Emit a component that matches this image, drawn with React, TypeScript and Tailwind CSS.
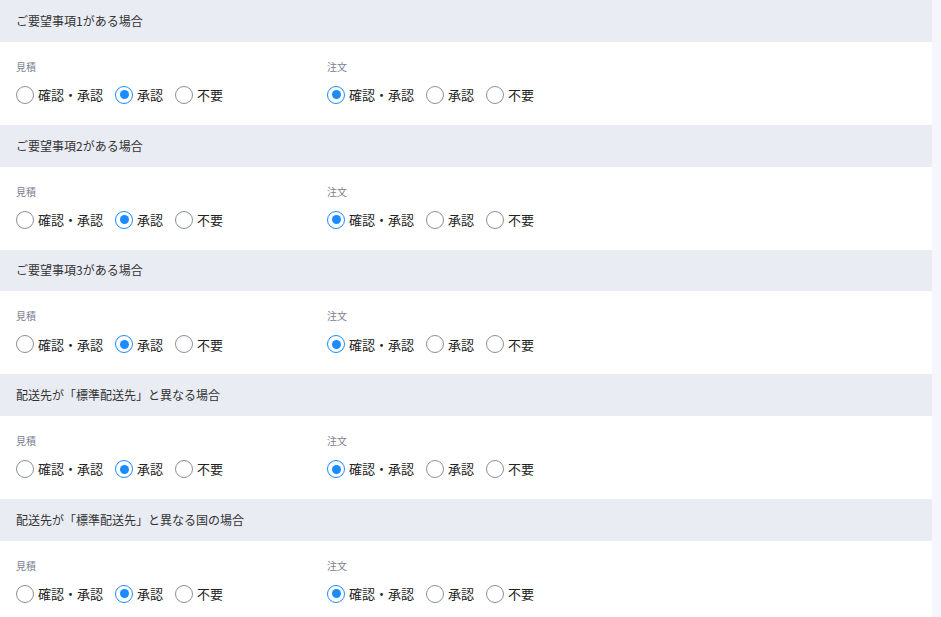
const sections = [
  "ご要望事項1がある場合",
  "ご要望事項2がある場合",
  "ご要望事項3がある場合",
  "配送先が「標準配送先」と異なる場合",
  "配送先が「標準配送先」と異なる国の場合",
];

const options = ["確認・承認", "承認", "不要"];

function Radio({ label, checked }: { label: string; checked: boolean }) {
  return (
    <label className="flex items-center gap-[4px]">
      {checked ? (
        <span className="w-[18px] h-[18px] rounded-full border-[1.5px] border-[#1a8cff] flex items-center justify-center">
          <span className="w-[9px] h-[9px] rounded-full bg-[#1a8cff]" />
        </span>
      ) : (
        <span className="w-[18px] h-[18px] rounded-full border-[1.5px] border-[#8b9099] bg-white" />
      )}
      <span className="text-[13px] text-[#222]">{label}</span>
    </label>
  );
}

function RadioGroup({ title, selected }: { title: string; selected: number }) {
  return (
    <div>
      <p className="text-[10px] leading-[14px] text-[#7b8190]">{title}</p>
      <div className="flex items-center gap-[12px] mt-[11px] h-[20px]">
        {options.map((o, i) => (
          <Radio key={o} label={o} checked={i === selected} />
        ))}
      </div>
    </div>
  );
}

export default function App() {
  return (
    <div
      className="flex w-[941px] h-[617px] overflow-hidden bg-[#f6f7fc]"
      style={{ fontFamily: '"Noto Sans CJK JP", "Noto Sans", sans-serif' }}
    >
      <div className="w-[932px] bg-white">
        {sections.map((s) => (
          <div key={s}>
            <div className="h-[41.75px] bg-[#e9ecf3] flex items-center px-[16px] text-[12px] text-[#333]">
              {s}
            </div>
            <div className="h-[83px] pt-[18px] px-[16px] grid grid-cols-[311px_1fr]">
              <RadioGroup title="見積" selected={1} />
              <RadioGroup title="注文" selected={0} />
            </div>
          </div>
        ))}
      </div>
    </div>
  );
}
